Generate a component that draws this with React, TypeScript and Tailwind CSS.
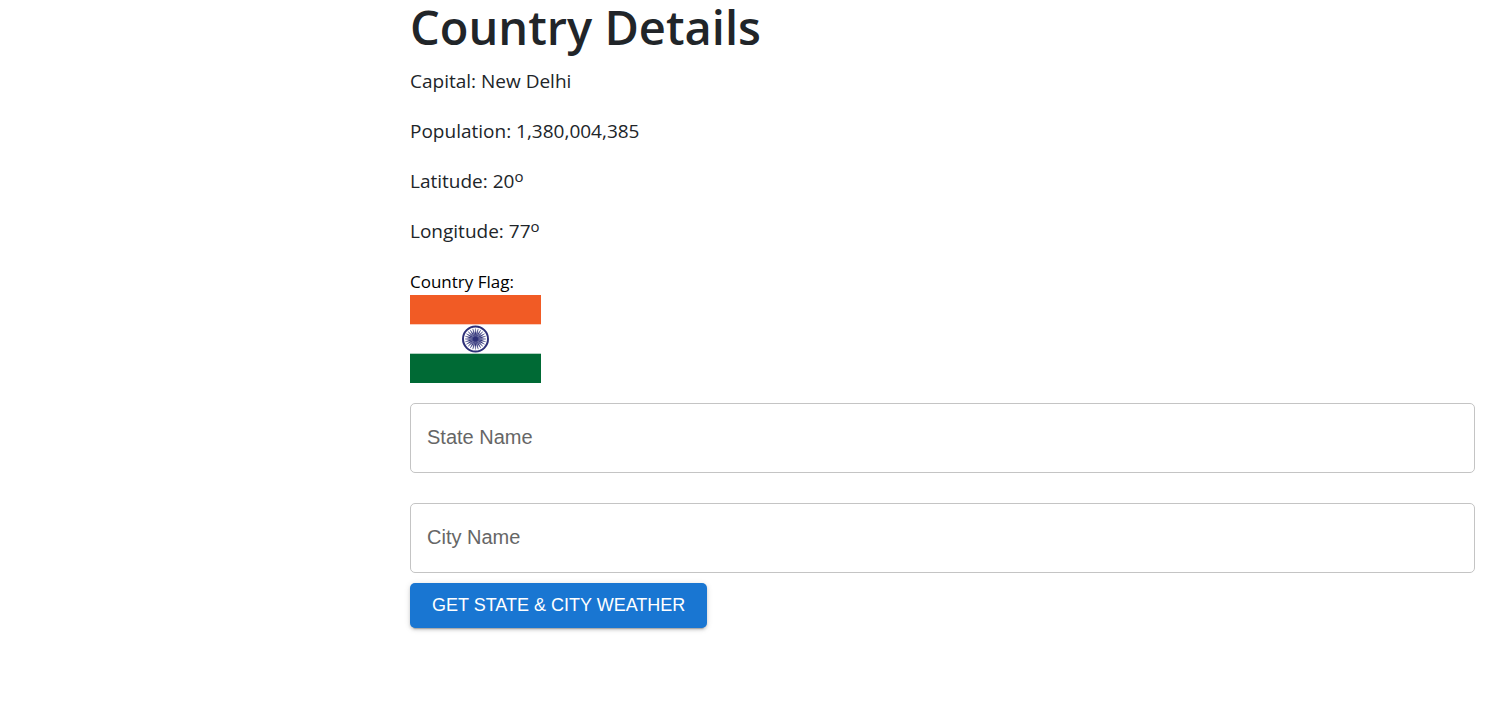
const spokes = Array.from({ length: 24 }, (_, i) => i * 15);

function Flag() {
  return (
    <svg viewBox="0 0 131 88" className="block h-[88px] w-[131px]" role="img" aria-label="Flag of India">
      <rect width="131" height="88" fill="#fff" />
      <rect width="131" height="29.3" fill="#f15b25" />
      <rect y="58.7" width="131" height="29.3" fill="#006a35" />
      <g stroke="#2e3078" fill="none">
        <circle cx="65.5" cy="44" r="12.5" strokeWidth="2" />
        {spokes.map((a) => (
          <path key={a} d="M65.5 44L65 38L65.5 33.5L66 38Z" fill="#2e3078" strokeWidth="0.3" transform={`rotate(${a} 65.5 44)`} />
        ))}
        <circle cx="65.5" cy="44" r="2.6" fill="#2e3078" stroke="none" />
      </g>
    </svg>
  );
}

function Fact({ label, value, degrees }: { label: string; value: string; degrees?: boolean }) {
  return (
    <p className="mb-5 text-[19px] leading-[30px]">
      {label}: {value}
      {degrees && <sup className="relative -top-1.5 align-baseline text-[15px] leading-none">o</sup>}
    </p>
  );
}

function Field({ id, label }: { id: string; label: string }) {
  return (
    <input
      id={id}
      type="text"
      aria-label={label}
      placeholder={label}
      className="block h-[70px] w-full rounded-[5px] border border-[#c4c4c4] px-4 pb-0.5 font-['Liberation_Sans',sans-serif] text-xl text-black/85 placeholder:text-[#666666]"
    />
  );
}

export default function App() {
  return (
    <main className="min-h-screen bg-white pr-3.5 pl-[410px] font-['Open_Sans','Noto_Sans',sans-serif] text-[#212529]">
      <h1 className="mb-3 text-[47px] leading-[54px] font-semibold">Country Details</h1>
      <Fact label="Capital" value="New Delhi" />
      <Fact label="Population" value="1,380,004,385" />
      <Fact label="Latitude" value="20" degrees />
      <Fact label="Longitude" value="77" degrees />
      <div className="pt-0.5 text-[17px] leading-[27px] text-black">Country Flag:</div>
      <Flag />
      <form className="mt-5" onSubmit={(e) => e.preventDefault()}>
        <div className="flex flex-col gap-[30px]">
          <Field id="state" label="State Name" />
          <Field id="city" label="City Name" />
        </div>
        <button
          type="submit"
          className="mt-2.5 h-[45px] rounded-[5px] bg-[#1976d2] px-[22px] pb-0.5 font-['Liberation_Sans',sans-serif] text-lg text-white uppercase shadow-[0px_4px_1px_-3px_rgba(0,0,0,0.2),0px_2px_3px_0px_rgba(0,0,0,0.14),0px_1px_6px_0px_rgba(0,0,0,0.12)]"
        >
          Get State &amp; City Weather
        </button>
      </form>
    </main>
  );
}
